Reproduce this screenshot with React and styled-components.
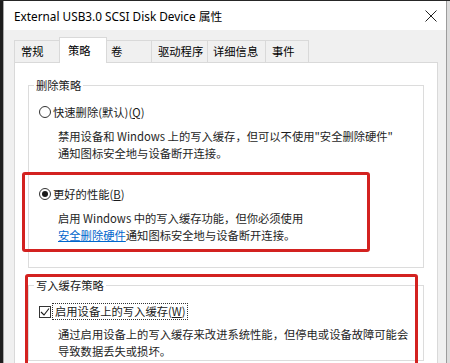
import React from "react";
import styled, { createGlobalStyle } from "styled-components";

const Global = createGlobalStyle`
  html, body { margin: 0; padding: 0; background: #f0f0f0; }
  * { box-sizing: border-box; }
`;

const CJK = `"Noto Sans CJK SC", "Noto Sans", sans-serif`;

const Frame = styled.div`
  position: relative;
  width: 450px;
  height: 363px;
  overflow: hidden;
  display: flex;
  flex-direction: column;
  border-top: 1px solid #262626;
  background: #f0f0f0;
  font-family: ${CJK};
  color: #1a1a1a;
`;

const Row = styled.div`
  display: flex;
  flex: 1;
  min-height: 0;
`;

const LeftStrip = styled.div`
  width: 4px;
  background: #1e1e1e;
  border-right: 1px solid #a8a8a8;
`;

const RightStrip = styled.div`
  width: 4px;
  background: #dcdcdc;
  border-left: 1px solid #9c9c9c;
`;

const Window = styled.div`
  flex: 1;
  display: flex;
  flex-direction: column;
  min-width: 0;
  background: #f0f0f0;
`;

const TitleBar = styled.div`
  height: 29px;
  flex: none;
  background: #ffffff;
  display: flex;
  align-items: center;
  justify-content: space-between;
  padding: 0 9px 0 10px;
`;

const Title = styled.div`
  font-family: "Noto Sans", "Noto Sans CJK SC", sans-serif;
  font-size: 11.8px;
  color: #000;
  white-space: nowrap;
`;

const Body = styled.div`
  flex: 1;
  display: flex;
  flex-direction: column;
  padding: 7px 8px 0 10px;
  min-height: 0;
`;

const TabRow = styled.div`
  display: flex;
  align-items: flex-start;
  height: 25px;
  flex: none;
`;

const Tab = styled.div`
  position: relative;
  z-index: ${(p) => (p.$active ? 2 : 1)};
  width: ${(p) => p.$w}px;
  height: ${(p) => (p.$active ? 26 : 22)}px;
  margin-top: ${(p) => (p.$active ? 0 : 3)}px;
  margin-left: -1px;
  padding-left: ${(p) => p.$pl}px;
  padding-top: ${(p) => (p.$active ? 4 : 2)}px;
  background: ${(p) => (p.$active ? "#ffffff" : "#f0f0f0")};
  border: 1px solid #d9d9d9;
  border-bottom: none;
  font-size: 11.3px;
  line-height: 17px;
  white-space: nowrap;
  color: #000;
  &:first-child { margin-left: 0; }
`;

const Panel = styled.div`
  flex: 1;
  background: #ffffff;
  border: 1px solid #d9d9d9;
  border-bottom: none;
  padding: 14px 13px 0 13px;
`;

const Group = styled.fieldset`
  margin: ${(p) => p.$mt || 0}px 0 0 0;
  padding: 0 0 ${(p) => p.$pb || 0}px 0;
  border: 1px solid #dcdcdc;
  min-width: 0;
`;

const Legend = styled.legend`
  margin-left: 5px;
  padding: 0 2px;
  font-size: 11.3px;
  line-height: 16px;
  color: #1a1a1a;
`;

const OptionRow = styled.div`
  display: flex;
  align-items: center;
  height: 17px;
  margin-top: ${(p) => p.$mt}px;
  padding-left: 10px;
  font-size: 11.3px;
  white-space: nowrap;
`;

const RadioCircle = styled.span`
  width: 12px;
  height: 12px;
  border-radius: 50%;
  border: 1px solid #333;
  background: #fff;
  display: flex;
  align-items: center;
  justify-content: center;
  margin-right: 2px;
  flex: none;
  &::after {
    content: "";
    width: 6px;
    height: 6px;
    border-radius: 50%;
    background: #1a1a1a;
    display: ${(p) => (p.$on ? "block" : "none")};
  }
`;

const CheckBox = styled.span`
  width: 12px;
  height: 12px;
  border: 1px solid #333;
  background: #fff;
  display: flex;
  align-items: center;
  justify-content: center;
  margin-right: 2px;
  flex: none;
`;

const FocusLabel = styled.span`
  outline: 1px dotted #333;
  outline-offset: 0;
  padding: 0 1px 0 2px;
  line-height: 15px;
`;

const Desc = styled.div`
  margin-top: ${(p) => p.$mt}px;
  padding-left: 29px;
  font-size: 11.3px;
  line-height: 17px;
  white-space: nowrap;
  color: #1e1e1e;
`;

const Link = styled.span`
  color: #0066cc;
  text-decoration: underline;
`;

const Red = styled.div`
  position: absolute;
  left: ${(p) => p.$x}px;
  top: ${(p) => p.$y}px;
  width: ${(p) => p.$w}px;
  height: ${(p) => p.$h}px;
  border: 3px solid #d32220;
  border-radius: 3px;
  pointer-events: none;
`;

const tabs = [
  { t: "常规", w: 46, pl: 6 },
  { t: "策略", w: 48, pl: 8, active: true },
  { t: "卷", w: 46, pl: 4 },
  { t: "驱动程序", w: 57, pl: 6 },
  { t: "详细信息", w: 59, pl: 5 },
  { t: "事件", w: 44, pl: 6 },
];

export default function App() {
  return (
    <>
      <Global />
      <Frame>
        <Row>
          <LeftStrip />
          <Window>
            <TitleBar>
              <Title>External USB3.0 SCSI Disk Device 属性</Title>
              <svg width="12" height="12" viewBox="0 0 12 12">
                <path d="M0.5 0.5 L11.5 11.5 M11.5 0.5 L0.5 11.5" stroke="#222" strokeWidth="1" fill="none" />
              </svg>
            </TitleBar>
            <Body>
              <TabRow>
                {tabs.map((x) => (
                  <Tab key={x.t} $w={x.w} $pl={x.pl} $active={x.active}>
                    {x.t}
                  </Tab>
                ))}
              </TabRow>
              <Panel>
                <Group $pb={23}>
                  <Legend>删除策略</Legend>
                  <OptionRow $mt={10}>
                    <RadioCircle />
                    快速删除(默认)(<u>Q</u>)
                  </OptionRow>
                  <Desc $mt={8}>
                    禁用设备和 Windows 上的写入缓存，但可以不使用"安全删除硬件"
                    <br />
                    通知图标安全地与设备断开连接。
                  </Desc>
                  <OptionRow $mt={23}>
                    <RadioCircle $on />
                    更好的性能(<u>B</u>)
                  </OptionRow>
                  <Desc $mt={8}>
                    启用 Windows 中的写入缓存功能，但你必须使用
                    <br />
                    <Link>安全删除硬件</Link>通知图标安全地与设备断开连接。
                  </Desc>
                </Group>
                <Group $mt={9}>
                  <Legend>写入缓存策略</Legend>
                  <OptionRow $mt={10}>
                    <CheckBox>
                      <svg width="10" height="10" viewBox="0 0 10 10">
                        <path d="M1 5 L4 8 L9 1.5" stroke="#1a1a1a" strokeWidth="1.1" fill="none" />
                      </svg>
                    </CheckBox>
                    <FocusLabel>
                      启用设备上的写入缓存(<u>W</u>)
                    </FocusLabel>
                  </OptionRow>
                  <Desc $mt={6}>
                    通过启用设备上的写入缓存来改进系统性能，但停电或设备故障可能会
                    <br />
                    导致数据丢失或损坏。
                  </Desc>
                </Group>
              </Panel>
            </Body>
          </Window>
          <RightStrip />
        </Row>
        <Red $x={22} $y={171} $w={348} $h={80} />
        <Red $x={25} $y={273} $w={393} $h={110} />
      </Frame>
    </>
  );
}
